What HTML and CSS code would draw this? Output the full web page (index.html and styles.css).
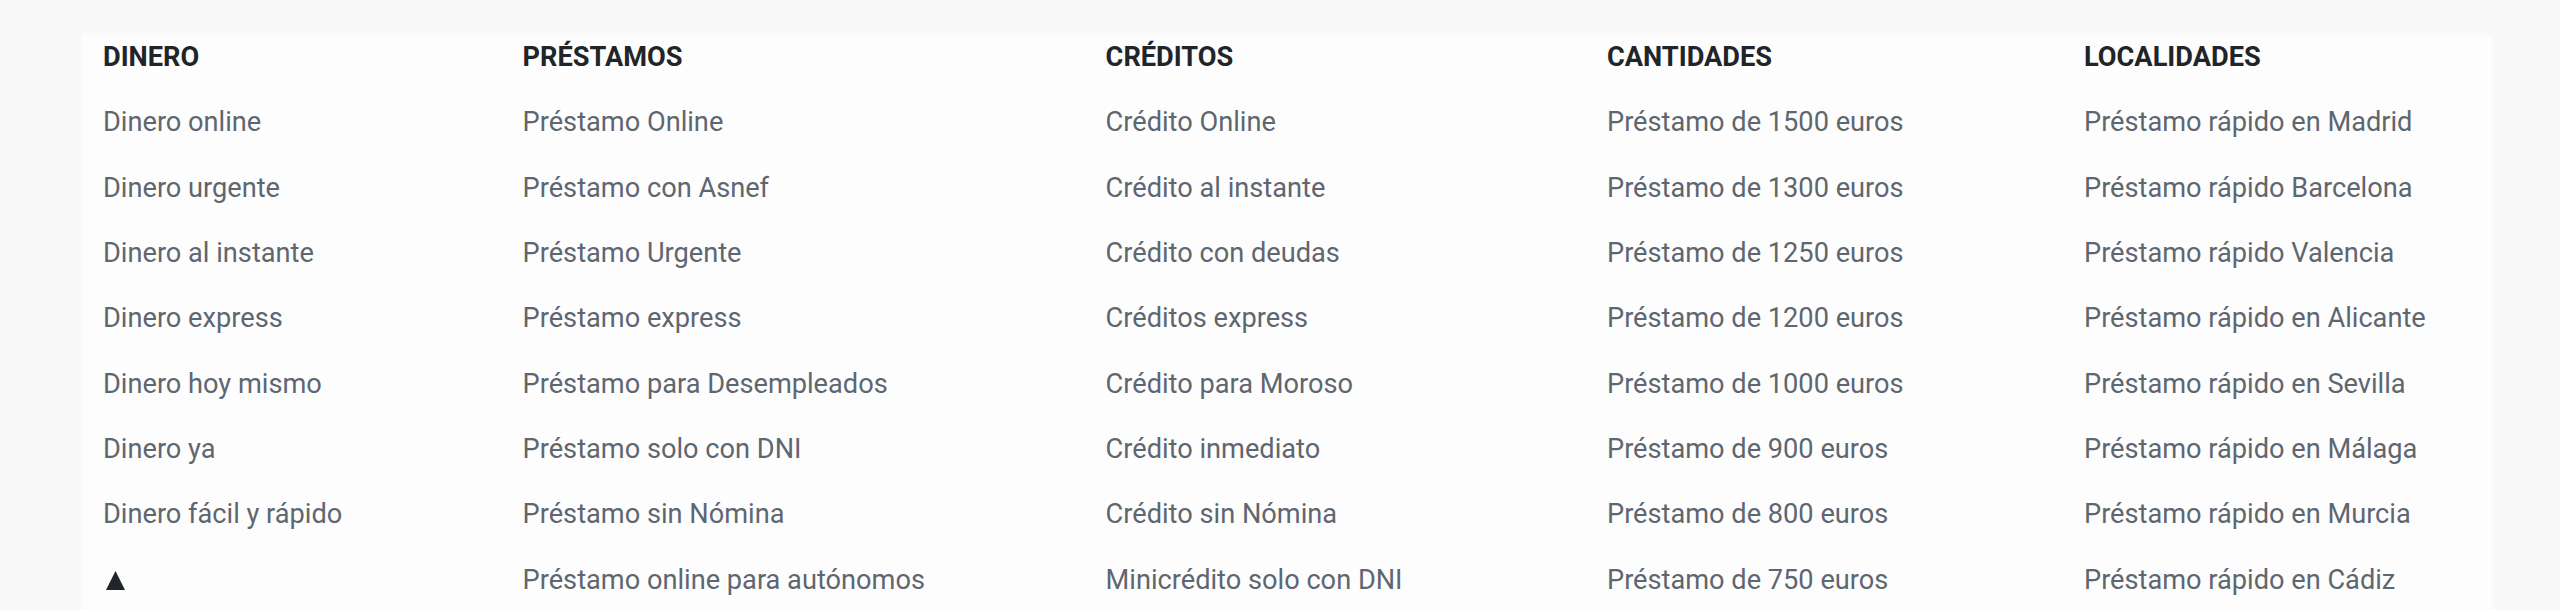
FILE: index.html
```html
<!DOCTYPE html>
<html lang="es">
<head>
<meta charset="utf-8">
<title>Enlaces</title>
<link rel="stylesheet" href="styles.css">
</head>
<body>
<div class="panel">
  <nav class="cols">
    <div class="col">
      <h3 class="col-title">DINERO</h3>
      <ul class="links">
        <li>Dinero online</li>
        <li>Dinero urgente</li>
        <li>Dinero al instante</li>
        <li>Dinero express</li>
        <li>Dinero hoy mismo</li>
        <li>Dinero ya</li>
        <li>Dinero fácil y rápido</li>
        <li class="more"><svg class="tri" width="19" height="19" viewBox="0 0 19 19"><polygon points="9.5,0 19,19 0,19" fill="#212529"/></svg></li>
      </ul>
    </div>
    <div class="col">
      <h3 class="col-title">PRÉSTAMOS</h3>
      <ul class="links">
        <li>Préstamo Online</li>
        <li>Préstamo con Asnef</li>
        <li>Préstamo Urgente</li>
        <li>Préstamo express</li>
        <li>Préstamo para Desempleados</li>
        <li>Préstamo solo con DNI</li>
        <li>Préstamo sin Nómina</li>
        <li>Préstamo online para autónomos</li>
      </ul>
    </div>
    <div class="col">
      <h3 class="col-title">CRÉDITOS</h3>
      <ul class="links">
        <li>Crédito Online</li>
        <li>Crédito al instante</li>
        <li>Crédito con deudas</li>
        <li>Créditos express</li>
        <li>Crédito para Moroso</li>
        <li>Crédito inmediato</li>
        <li>Crédito sin Nómina</li>
        <li>Minicrédito solo con DNI</li>
      </ul>
    </div>
    <div class="col">
      <h3 class="col-title">CANTIDADES</h3>
      <ul class="links">
        <li>Préstamo de 1500 euros</li>
        <li>Préstamo de 1300 euros</li>
        <li>Préstamo de 1250 euros</li>
        <li>Préstamo de 1200 euros</li>
        <li>Préstamo de 1000 euros</li>
        <li>Préstamo de 900 euros</li>
        <li>Préstamo de 800 euros</li>
        <li>Préstamo de 750 euros</li>
      </ul>
    </div>
    <div class="col">
      <h3 class="col-title">LOCALIDADES</h3>
      <ul class="links">
        <li>Préstamo rápido en Madrid</li>
        <li>Préstamo rápido Barcelona</li>
        <li>Préstamo rápido Valencia</li>
        <li>Préstamo rápido en Alicante</li>
        <li>Préstamo rápido en Sevilla</li>
        <li>Préstamo rápido en Málaga</li>
        <li>Préstamo rápido en Murcia</li>
        <li>Préstamo rápido en Cádiz</li>
      </ul>
    </div>
  </nav>
</div>
</body>
</html>
```
FILE: styles.css
```css
html, body {
  margin: 0;
  padding: 0;
  background: #f9f9f9;
  font-family: Roboto, "Liberation Sans", Arial, sans-serif;
  overflow: hidden;
}

.panel {
  margin: 35px 0 0 82px;
  width: 2389px;
  height: 600px;
  padding-left: 21px;
  background: #fdfdfd;
}

.cols {
  display: grid;
  grid-template-columns: 419.6px 583px 501.4px 477px auto;
}

.col-title {
  margin: 0 0 10.3px 0;
  font-size: 27.2px;
  font-weight: 700;
  line-height: 45px;
  color: #212529;
}

.links {
  list-style: none;
  margin: 0;
  padding: 0;
}

.links li {
  font-size: 27.2px;
  line-height: 65.33px;
  height: 65.33px;
  color: #5e6670;
  white-space: nowrap;
}

.links .more {
  display: flex;
  align-items: center;
  padding-left: 3px;
}

.tri {
  display: block;
  margin-top: 1px;
}
```
